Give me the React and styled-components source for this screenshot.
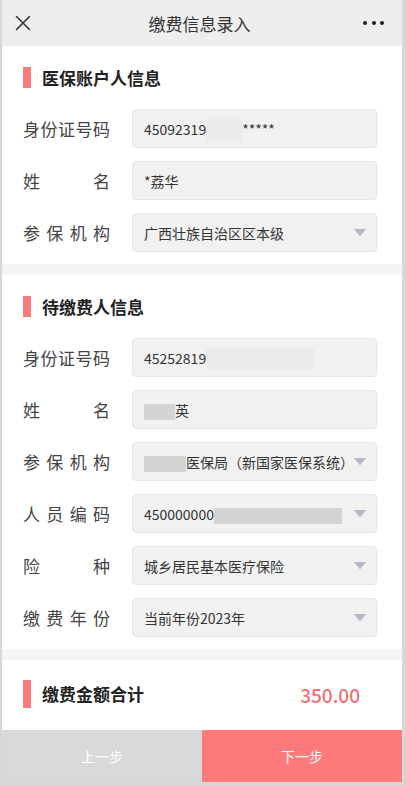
import React from "react";
import styled, { createGlobalStyle } from "styled-components";

const GlobalStyle = createGlobalStyle`
  html, body {
    margin: 0;
    padding: 0;
    background: #d8d8d8;
  }
  * {
    box-sizing: border-box;
  }
  body {
    font-family: "Noto Sans CJK SC", "Noto Sans", sans-serif;
  }
`;

const payer = [
  { label: "身份证号码", value: ["45092319", { mask: 36, tone: "light" }, "*****"] },
  { label: "姓名", value: ["*荔华"] },
  { label: "参保机构", value: ["广西壮族自治区区本级"], select: true },
];

const insured = [
  { label: "身份证号码", value: ["45252819", { mask: 108, tone: "light" }] },
  { label: "姓名", value: [{ mask: 31, tone: "dark" }, "英"] },
  {
    label: "参保机构",
    value: [{ mask: 42, tone: "dark" }, "医保局（新国家医保系统）"],
    select: true,
  },
  { label: "人员编码", value: ["450000000", { mask: 128, tone: "dark" }], select: true },
  { label: "险种", value: ["城乡居民基本医疗保险"], select: true },
  { label: "缴费年份", value: ["当前年份2023年"], select: true },
];

export default function App() {
  return (
    <>
      <GlobalStyle />
      <StFrame>
        <StHeader>
          <StHeaderIcon>
            <svg width="16" height="16" viewBox="0 0 16 16">
              <path
                d="M1.5 1.5 L14.5 14.5 M14.5 1.5 L1.5 14.5"
                stroke="#333"
                strokeWidth="1.6"
                strokeLinecap="round"
              />
            </svg>
          </StHeaderIcon>
          <StHeaderTitle>缴费信息录入</StHeaderTitle>
          <StHeaderIcon $right>
            <StDots>
              <i />
              <i />
              <i />
            </StDots>
          </StHeaderIcon>
        </StHeader>

        <StMain>
          <StSection>
            <StSectionTitle>医保账户人信息</StSectionTitle>
            <StRows>
              {payer.map((row) => (
                <FormRow key={row.label} row={row} />
              ))}
            </StRows>
          </StSection>
          <StBand />
          <StSection>
            <StSectionTitle>待缴费人信息</StSectionTitle>
            <StRows>
              {insured.map((row) => (
                <FormRow key={row.label} row={row} />
              ))}
            </StRows>
          </StSection>
          <StBand />
          <StTotal>
            <StSectionTitle $tall>缴费金额合计</StSectionTitle>
            <StAmount>350.00</StAmount>
          </StTotal>
        </StMain>

        <StFooter>
          <StStepButton>上一步</StStepButton>
          <StStepButton $primary>下一步</StStepButton>
        </StFooter>
      </StFrame>
    </>
  );
}

function FormRow({ row }) {
  return (
    <StRow>
      <StLabel>{row.label}</StLabel>
      <StField>
        <StValue>
          {row.value.map((part, i) =>
            typeof part === "string" ? (
              <span key={i}>{part}</span>
            ) : (
              <StMask key={i} $w={part.mask} $tone={part.tone} />
            )
          )}
        </StValue>
        {row.select && (
          <svg width="12" height="8" viewBox="0 0 12 8">
            <polygon points="0,0 12,0 6,7.5" fill="#b6b9c6" />
          </svg>
        )}
      </StField>
    </StRow>
  );
}

const StFrame = styled.div`
  width: 405px;
  height: 785px;
  border-left: 2px solid #d8d8d8;
  border-right: 3px solid #d8d8d8;
  border-bottom: 3px solid #d8d8d8;
  background: #fff;
  display: flex;
  flex-direction: column;
  overflow: hidden;
`;

const StHeader = styled.div`
  height: 46px;
  flex-shrink: 0;
  background: #eeeeee;
  display: flex;
  align-items: center;
  justify-content: space-between;
  padding: 0 18px 0 13px;
`;

const StHeaderTitle = styled.div`
  font-size: 17px;
  color: #333;
`;

const StHeaderIcon = styled.div`
  width: 28px;
  display: flex;
  justify-content: ${(p) => (p.$right ? "flex-end" : "flex-start")};
  align-items: center;
`;

const StDots = styled.div`
  display: flex;
  gap: 4.5px;
  i {
    width: 4px;
    height: 4px;
    border-radius: 50%;
    background: #222;
  }
`;

const StMain = styled.div`
  flex: 1;
  display: flex;
  flex-direction: column;
`;

const StSection = styled.div`
  padding: 21px 25px 12px 21px;
  display: flex;
  flex-direction: column;
  gap: 21px;
`;

const StSectionTitle = styled.div`
  display: flex;
  align-items: center;
  gap: 11px;
  font-size: 17px;
  font-weight: 700;
  color: #222;
  line-height: 20px;
  &::before {
    content: "";
    width: 8px;
    height: ${(p) => (p.$tall ? "28px" : "21px")};
    background: #fb7b7b;
  }
`;

const StRows = styled.div`
  display: flex;
  flex-direction: column;
  gap: 13px;
`;

const StRow = styled.div`
  display: flex;
  align-items: center;
  gap: 22px;
`;

const StLabel = styled.div`
  width: 87px;
  flex-shrink: 0;
  font-size: 17px;
  line-height: 24px;
  color: #444;
  text-align: justify;
  text-align-last: justify;
`;

const StField = styled.div`
  flex: 1;
  height: 39px;
  background: #f1f1f1;
  border: 1px solid #e6e6e6;
  border-radius: 4px;
  display: flex;
  align-items: center;
  justify-content: space-between;
  padding: 0 10px 0 11px;
`;

const StValue = styled.div`
  display: flex;
  align-items: center;
  font-size: 14px;
  color: #333;
  white-space: nowrap;
  overflow: hidden;
`;

const StMask = styled.span`
  display: inline-block;
  width: ${(p) => p.$w}px;
  height: ${(p) => (p.$tone === "dark" ? "16px" : "22px")};
  margin-top: ${(p) => (p.$tone === "dark" ? "4px" : "2px")};
  background: ${(p) => (p.$tone === "dark" ? "#d4d4d4" : "#ebebeb")};
`;

const StBand = styled.div`
  height: 11px;
  background: #f5f5f5;
`;

const StTotal = styled.div`
  padding: 20px 42px 0 21px;
  display: flex;
  align-items: center;
  justify-content: space-between;
`;

const StAmount = styled.div`
  font-size: 19px;
  font-weight: 500;
  color: #f07272;
`;

const StFooter = styled.div`
  height: 52px;
  flex-shrink: 0;
  display: flex;
`;

const StStepButton = styled.button`
  flex: 1;
  border: none;
  margin: 0;
  padding: 0;
  font-family: "Noto Sans CJK SC", sans-serif;
  font-size: 14px;
  color: #fff;
  background: ${(p) => (p.$primary ? "#ff7b7b" : "#d9d9d9")};
  cursor: pointer;
`;
